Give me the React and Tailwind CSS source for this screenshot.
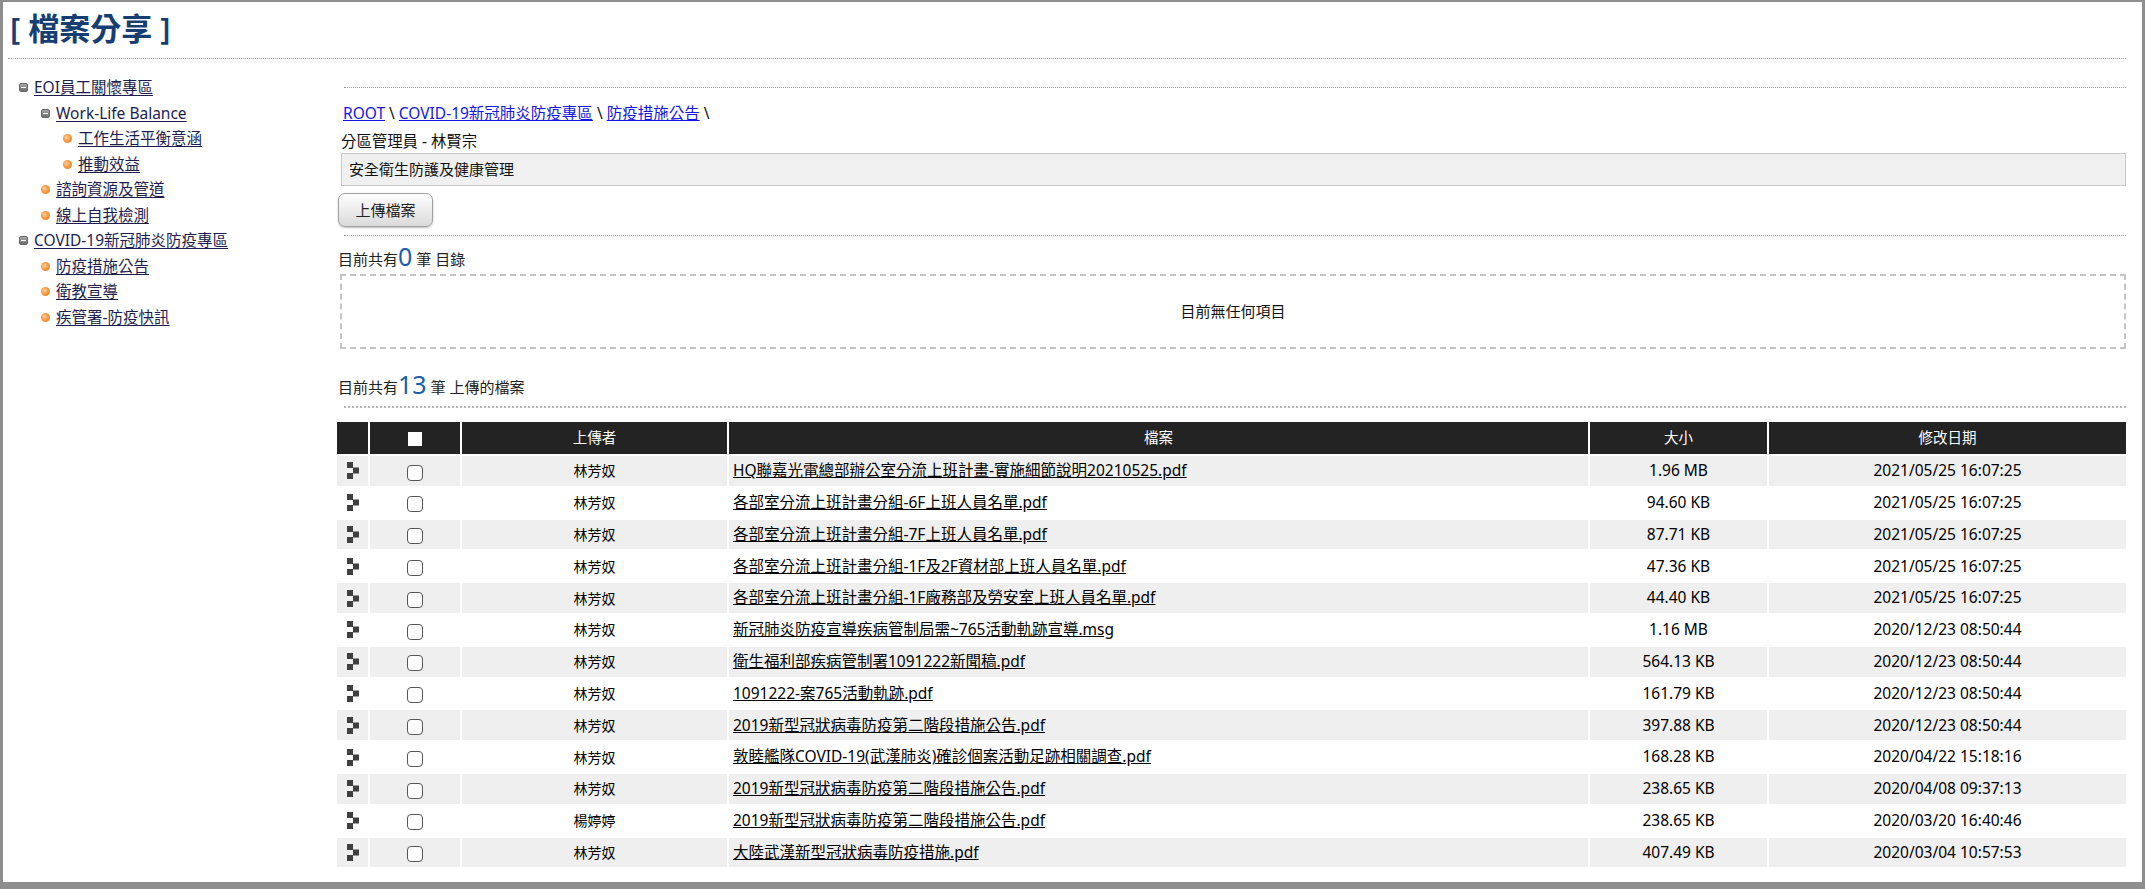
import React from 'react';

const files = [
  { user: '林芳奴', name: 'HQ聯嘉光電總部辦公室分流上班計畫-實施細節說明20210525.pdf', size: '1.96 MB', date: '2021/05/25 16:07:25' },
  { user: '林芳奴', name: '各部室分流上班計畫分組-6F上班人員名單.pdf', size: '94.60 KB', date: '2021/05/25 16:07:25' },
  { user: '林芳奴', name: '各部室分流上班計畫分組-7F上班人員名單.pdf', size: '87.71 KB', date: '2021/05/25 16:07:25' },
  { user: '林芳奴', name: '各部室分流上班計畫分組-1F及2F資材部上班人員名單.pdf', size: '47.36 KB', date: '2021/05/25 16:07:25' },
  { user: '林芳奴', name: '各部室分流上班計畫分組-1F廠務部及勞安室上班人員名單.pdf', size: '44.40 KB', date: '2021/05/25 16:07:25' },
  { user: '林芳奴', name: '新冠肺炎防疫宣導疾病管制局需~765活動軌跡宣導.msg', size: '1.16 MB', date: '2020/12/23 08:50:44' },
  { user: '林芳奴', name: '衛生福利部疾病管制署1091222新聞稿.pdf', size: '564.13 KB', date: '2020/12/23 08:50:44' },
  { user: '林芳奴', name: '1091222-案765活動軌跡.pdf', size: '161.79 KB', date: '2020/12/23 08:50:44' },
  { user: '林芳奴', name: '2019新型冠狀病毒防疫第二階段措施公告.pdf', size: '397.88 KB', date: '2020/12/23 08:50:44' },
  { user: '林芳奴', name: '敦睦艦隊COVID-19(武漢肺炎)確診個案活動足跡相關調查.pdf', size: '168.28 KB', date: '2020/04/22 15:18:16' },
  { user: '林芳奴', name: '2019新型冠狀病毒防疫第二階段措施公告.pdf', size: '238.65 KB', date: '2020/04/08 09:37:13' },
  { user: '楊婷婷', name: '2019新型冠狀病毒防疫第二階段措施公告.pdf', size: '238.65 KB', date: '2020/03/20 16:40:46' },
  { user: '林芳奴', name: '大陸武漢新型冠狀病毒防疫措施.pdf', size: '407.49 KB', date: '2020/03/04 10:57:53' },
];

const tree = [
  { label: 'EOI員工關懷專區', level: 0, folder: true },
  { label: 'Work-Life Balance', level: 1, folder: true },
  { label: '工作生活平衡意涵', level: 2 },
  { label: '推動效益', level: 2 },
  { label: '諮詢資源及管道', level: 1 },
  { label: '線上自我檢測', level: 1 },
  { label: 'COVID-19新冠肺炎防疫專區', level: 0, folder: true },
  { label: '防疫措施公告', level: 1 },
  { label: '衛教宣導', level: 1 },
  { label: '疾管署-防疫快訊', level: 1 },
];

const indent = ['pl-[16px]', 'pl-[38px]', 'pl-[60px]'];

function FolderIcon() {
  return (
    <span className="w-[9px] h-[9px] rounded-[2px] bg-gradient-to-b from-[#a8a8a8] to-[#6e6e6e] border border-[#666] flex items-center justify-center shrink-0">
      <span className="w-[5px] h-[1px] bg-white" />
    </span>
  );
}

function Bullet() {
  return (
    <span className="w-[9px] h-[9px] rounded-full bg-[radial-gradient(circle_at_40%_40%,#ffd0a0_0%,#f59a40_45%,#e2701c_100%)] shrink-0" />
  );
}

function RowIcon() {
  return (
    <svg width="12" height="17" viewBox="0 0 12 17" className="mx-auto block">
      <rect x="0" y="0" width="6" height="6" fill="#3f3f3f" />
      <rect x="6" y="5.5" width="6" height="6" fill="#3f3f3f" />
      <rect x="0" y="11" width="6" height="6" fill="#3f3f3f" />
    </svg>
  );
}

export default function App() {
  return (
    <div className="w-[2145px] h-[889px] bg-white border-t-2 border-l-[3px] border-r-[3px] border-b-[7px] border-[#8e8e8e] font-['Noto_Sans','Noto_Sans_CJK_TC',sans-serif] text-[#111] overflow-hidden">
      <div className="pl-[7px] pt-[8px]">
        <h1 className="text-[31px] leading-[37px] text-[#163e72] font-semibold">[ 檔案分享 ]</h1>
      </div>
      <div className="ml-[5px] mr-[16px] mt-[11px] border-t border-dotted border-[#9a9a9a]" />

      <div className="flex pt-[16px]">
        <ul className="w-[335px] shrink-0">
          {tree.map((t, i) => (
            <li key={i} className={`h-[25.5px] flex items-center gap-[6px] ${indent[t.level]}`}>
              {t.folder ? <FolderIcon /> : <Bullet />}
              <a className="text-[15.5px] text-[#1d1d4e] underline underline-offset-2">{t.label}</a>
            </li>
          ))}
        </ul>

        <div className="flex-1 mr-[16px]">
          <div className="mt-[12px] ml-[6px] border-t border-dotted border-[#9a9a9a]" />
          <div className="mt-[14px] pl-[5px] text-[15.5px] leading-[22px] text-[#111]">
            <a className="text-[#1515e6] underline">ROOT</a> \ <a className="text-[#1515e6] underline">COVID-19新冠肺炎防疫專區</a> \ <a className="text-[#1515e6] underline">防疫措施公告</a> \
          </div>
          <div className="mt-[7px] pl-[3px] text-[15.4px] leading-[22px]">分區管理員 - 林賢宗</div>
          <div className="ml-[3px] h-[33px] bg-[#f0f0f0] border border-[#c9c9c9] flex items-center pl-[7px] text-[15px]">
            安全衛生防護及健康管理
          </div>
          <button className="mt-[7px] w-[95px] h-[34px] rounded-[7px] border border-[#a0a0a0] bg-gradient-to-b from-white to-[#dadada] shadow-[0_1px_2px_rgba(0,0,0,0.25)] text-[15px] text-[#222]">
            上傳檔案
          </button>
          <div className="mt-[8px] ml-[6px] border-t border-dotted border-[#9a9a9a]" />
          <div className="mt-[8px] h-[26px] flex items-end text-[15px] text-[#222]">
            目前共有<span className="text-[25px] leading-[28px] text-[#1a5fa8]">0</span>&nbsp;筆 目錄
          </div>
          <div className="mt-[4px] ml-[2px] h-[75px] border-2 border-dashed border-[#c4c4c4] flex items-center justify-center text-[15px]">
            目前無任何項目
          </div>
          <div className="mt-[23px] h-[26px] flex items-end text-[15px] text-[#222]">
            目前共有<span className="text-[25px] leading-[28px] text-[#1a5fa8]">13</span>&nbsp;筆 上傳的檔案
          </div>
          <div className="mt-[8px] ml-[6px] border-t-2 border-dotted border-[#b4b4b4]" />

          <table className="mt-[12px] ml-[-3px] w-[calc(100%+5px)] table-fixed border-separate border-spacing-[2px] text-[14px]">
            <colgroup>
              <col className="w-[31px]" />
              <col className="w-[90px]" />
              <col className="w-[265px]" />
              <col className="w-[859px]" />
              <col className="w-[177px]" />
              <col />
            </colgroup>
            <thead>
              <tr className="h-[32px] bg-[#232323] text-white text-[14.5px]">
                <th className="font-normal"></th>
                <th className="font-normal">
                  <span className="inline-block w-[14px] h-[14px] bg-white align-middle" />
                </th>
                <th className="font-normal">上傳者</th>
                <th className="font-normal">檔案</th>
                <th className="font-normal">大小</th>
                <th className="font-normal">修改日期</th>
              </tr>
            </thead>
            <tbody>
              {files.map((f, i) => {
                const bg = i % 2 === 0 ? 'bg-[#efefef]' : 'bg-white';
                return (
                  <tr key={i} className="h-[29.8px]">
                    <td className={bg}><RowIcon /></td>
                    <td className={`${bg} text-center`}>
                      <span className="inline-block w-[16px] h-[16px] rounded-[4px] border-[1.5px] border-[#555] bg-white align-middle" />
                    </td>
                    <td className={`${bg} text-center text-[#000]`}>{f.user}</td>
                    <td className={`${bg} pl-[4px] truncate text-[15.5px]`}>
                      <a className="underline text-[#000]">{f.name}</a>
                    </td>
                    <td className={`${bg} text-center text-[15.5px] text-[#000]`}>{f.size}</td>
                    <td className={`${bg} text-center text-[15.5px] text-[#000]`}>{f.date}</td>
                  </tr>
                );
              })}
            </tbody>
          </table>
        </div>
      </div>
    </div>
  );
}
